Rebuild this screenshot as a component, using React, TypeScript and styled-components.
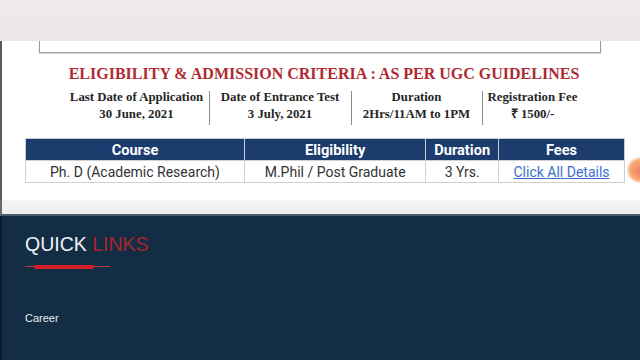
import React from "react";
import styled, { createGlobalStyle } from "styled-components";

const Global = createGlobalStyle`
  html, body { margin: 0; padding: 0; width: 640px; height: 360px; overflow: hidden; background: #132d44; }
  #root { width: 640px; height: 360px; }
`;

const Page = styled.div`
  width: 640px;
  height: 360px;
  display: flex;
  flex-direction: column;
  overflow: hidden;
`;

const TopBand = styled.div`
  height: 41px;
  flex: none;
  background: linear-gradient(180deg, #f0eaec 0%, #eee6e8 100%);
`;

const Content = styled.div`
  position: relative;
  flex: none;
  height: 159px;
  background: #ffffff;
  border-left: 2px solid #5a5a5a;
  box-sizing: border-box;
  display: flex;
  flex-direction: column;
  align-items: center;
`;

const FrameBottom = styled.div`
  width: 560px;
  height: 11px;
  margin-left: -2px;
  border: 1px solid #9a9a9a;
  border-top: none;
  box-shadow: 0 1px 1px rgba(0, 0, 0, 0.15);
  flex: none;
`;

const Title = styled.h2`
  margin: 12px 0 0 6px;
  font-family: "Liberation Serif", "Times New Roman", serif;
  font-weight: 700;
  font-size: 16px;
  color: #b02a31;
  line-height: 18px;
  white-space: nowrap;
`;

const InfoRow = styled.div`
  display: flex;
  align-items: stretch;
  margin-top: 6px;
  margin-left: 5px;
`;

const InfoCell = styled.div<{ $w: number }>`
  width: ${(p) => p.$w}px;
  display: flex;
  flex-direction: column;
  align-items: center;
  font-family: "Liberation Serif", "Times New Roman", serif;
  font-weight: 700;
  font-size: 12.8px;
  line-height: 17px;
  color: #262626;
  white-space: nowrap;
`;

const Divider = styled.div`
  width: 1px;
  margin: 2px 0 -2px 0;
  background: #8a8a8a;
`;

const Table = styled.table`
  margin: 15px 0 0 8px;
  width: 600px;
  border-collapse: collapse;
  font-family: Roboto, "Liberation Sans", Arial, sans-serif;
  font-size: 14px;
`;

const Th = styled.th<{ $w: number }>`
  width: ${(p) => p.$w}px;
  background: #1c3c6e;
  color: #ffffff;
  font-weight: 700;
  font-size: 14.6px;
  height: 21px;
  padding: 0;
  border: 1px solid #c8ccd4;
  border-bottom: none;
`;

const Td = styled.td`
  color: #333333;
  text-align: center;
  height: 21px;
  padding: 0;
  border: 1px solid #d0d0d0;
`;

const DetailLink = styled.a`
  color: #3b6fcc;
  text-decoration: underline;
  text-underline-offset: 1px;
`;

const OrangeDot = styled.div`
  position: absolute;
  right: -12px;
  top: 117px;
  width: 24px;
  height: 24px;
  border-radius: 50%;
  background: radial-gradient(circle at 50% 55%, #f07a70 0%, #f6a36a 45%, #f8bf8a 100%);
  filter: blur(1px);
`;

const GrayStrip = styled.div`
  height: 16px;
  flex: none;
  background: linear-gradient(180deg, #f5f5f7 0%, #eeeef1 100%);
  border-left: 2px solid #6a6a6a;
  border-bottom: 2px solid #4a5a6a;
  box-sizing: border-box;
`;

const Footer = styled.div`
  flex: 1;
  background: #132d44;
  border-left: 2px solid #0c1d2c;
  padding: 17px 0 0 23px;
  display: flex;
  flex-direction: column;
`;

const Heading = styled.h3`
  margin: 0;
  font-family: "Liberation Sans", Arial, sans-serif;
  font-weight: 400;
  font-size: 19.5px;
  line-height: 23px;
  color: #eef2f6;
`;

const Red = styled.span`
  color: #a8262f;
`;

const Underline = styled.div`
  position: relative;
  margin-top: 10px;
  width: 85px;
  height: 1px;
  background: #b23a40;
  &::after {
    content: "";
    position: absolute;
    left: 9px;
    top: -1.5px;
    width: 60px;
    height: 4px;
    border-radius: 2px;
    background: #d21f26;
  }
`;

const Career = styled.div`
  margin-top: 45px;
  font-family: "Liberation Sans", Arial, sans-serif;
  font-size: 11px;
  line-height: 13px;
  color: #e8edf2;
`;

export default function App() {
  return (
    <Page>
      <Global />
      <TopBand />
      <Content>
        <FrameBottom />
        <Title>ELIGIBILITY &amp; ADMISSION CRITERIA : AS PER UGC GUIDELINES</Title>
        <InfoRow>
          <InfoCell $w={144}>
            <span>Last Date of Application</span>
            <span>30 June, 2021</span>
          </InfoCell>
          <Divider />
          <InfoCell $w={141}>
            <span>Date of Entrance Test</span>
            <span>3 July, 2021</span>
          </InfoCell>
          <Divider />
          <InfoCell $w={130}>
            <span>Duration</span>
            <span>2Hrs/11AM to 1PM</span>
          </InfoCell>
          <Divider />
          <InfoCell $w={100}>
            <span>Registration Fee</span>
            <span>₹ 1500/-</span>
          </InfoCell>
        </InfoRow>
        <Table>
          <thead>
            <tr>
              <Th $w={220}>Course</Th>
              <Th $w={182}>Eligibility</Th>
              <Th $w={72}>Duration</Th>
              <Th $w={126}>Fees</Th>
            </tr>
          </thead>
          <tbody>
            <tr>
              <Td>Ph. D (Academic Research)</Td>
              <Td>M.Phil / Post Graduate</Td>
              <Td>3 Yrs.</Td>
              <Td>
                <DetailLink href="#">Click All Details</DetailLink>
              </Td>
            </tr>
          </tbody>
        </Table>
        <OrangeDot />
      </Content>
      <GrayStrip />
      <Footer>
        <Heading>
          QUICK <Red>LINKS</Red>
        </Heading>
        <Underline />
        <Career>Career</Career>
      </Footer>
    </Page>
  );
}
